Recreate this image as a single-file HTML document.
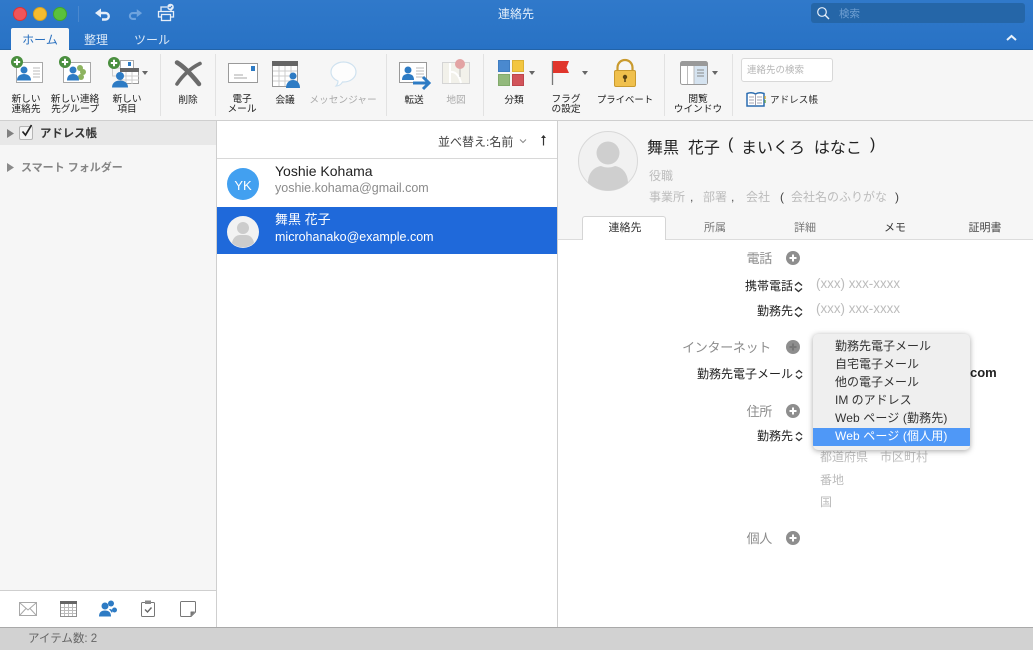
<!DOCTYPE html>
<html lang="ja"><head><meta charset="utf-8"><title>連絡先</title>
<style>
html,body{margin:0;padding:0}
body{width:1033px;height:650px;overflow:hidden;position:relative;background:#fff;font-family:"Liberation Sans","Noto Sans CJK JP",sans-serif;color:#222}
.a{position:absolute}
.t{position:absolute;white-space:nowrap;line-height:1}
.c{text-align:center;transform:translateX(-50%)}
.r{text-align:right;transform:translateX(-100%)}
.rb{font-size:9.7px;line-height:10px;color:#222;position:absolute;white-space:nowrap;text-align:center;transform:translateX(-50%)}
svg{position:absolute;overflow:visible}
.sep{position:absolute;top:54px;width:1px;height:62px;background:#e2e2e2}
.g{color:#bcbcbc}
.lab{color:#8c8c8c;font-size:13px;letter-spacing:-.3px}
.m{position:absolute;left:835px;font-size:12px;line-height:18px;color:#333;white-space:nowrap}
.sq{position:absolute;width:12px;height:12px;box-sizing:border-box}
</style></head><body>

<!-- title bar -->
<div class="a" style="left:0;top:0;width:1033px;height:49px;background:linear-gradient(#3079ca,#2872c5);border-bottom:1px solid #2263a8"></div>
<div class="a" style="left:13px;top:7px;width:12px;height:12px;border-radius:50%;background:#f0555a;border:.5px solid #d33"></div>
<div class="a" style="left:33px;top:7px;width:12px;height:12px;border-radius:50%;background:#f5bc30;border:.5px solid #d9a21f"></div>
<div class="a" style="left:53px;top:7px;width:12px;height:12px;border-radius:50%;background:#5ac13c;border:.5px solid #43a62a"></div>
<div class="a" style="left:78px;top:6px;width:1px;height:16px;background:#4a88cf"></div>
<svg style="left:94px;top:7px" width="18" height="14" viewBox="0 0 18 14"><path d="M5 6h6.500a3.200 3.200 0 0 1 0 6.500H8" fill="none" stroke="#e6eef8" stroke-width="2.400"/><path d="M1 6l6-4.500v9z" fill="#e6eef8"/></svg>
<svg style="left:127px;top:7px" width="16" height="14" viewBox="0 0 18 14"><path d="M13 6H6.500a3.200 3.200 0 0 0 0 6.500H10" fill="none" stroke="#6ea3de" stroke-width="2.400"/><path d="M17 6l-6-4.500v9z" fill="#6ea3de"/></svg>
<svg style="left:157px;top:4px" width="18" height="18" viewBox="0 0 18 18"><path d="M4 7V3h6M14 7V6M4 13H1.500V7.500H16.500V13H14" fill="none" stroke="#e6eef8" stroke-width="1.300"/><rect x="4.500" y="10.500" width="9" height="6" fill="none" stroke="#e6eef8" stroke-width="1.300"/><circle cx="13.500" cy="3" r="3.300" fill="#e6eef8"/><path d="M11.800 3l1.200 1.200 2-2.300" fill="none" stroke="#2b74c6" stroke-width="1"/></svg>
<div class="t c" style="left:516px;top:8px;font-size:12px;color:#e6f0fb">連絡先</div>
<div class="a" style="left:811px;top:3px;width:214px;height:20px;background:#2566a8;border-radius:3px"></div>
<svg style="left:816px;top:6px" width="14" height="14" viewBox="0 0 14 14"><circle cx="6" cy="6" r="4.300" fill="none" stroke="#e8f0fa" stroke-width="1.200"/><path d="M9 9l4 4" stroke="#e8f0fa" stroke-width="1.400"/></svg>
<div class="t" style="left:839px;top:9px;font-size:10.500px;color:#6f9fd2">検索</div>
<svg style="left:1006px;top:34px" width="11" height="7" viewBox="0 0 11 7"><path d="M1 6l4.500-4 4.500 4" fill="none" stroke="#eaf2fb" stroke-width="2"/></svg>
<!-- tabs -->
<div class="a" style="left:11px;top:28px;width:58px;height:22px;background:#f7f7f7;border-radius:2px 2px 0 0"></div>
<div class="t c" style="left:40px;top:34px;font-size:12px;color:#2a70bf">ホーム</div>
<div class="t c" style="left:96px;top:34px;font-size:12px;color:#dce9f7">整理</div>
<div class="t c" style="left:152px;top:34px;font-size:12px;color:#dce9f7">ツール</div>

<!-- ribbon -->
<div class="a" style="left:0;top:50px;width:1033px;height:70px;background:#f6f6f6;border-bottom:1px solid #cfcfcf"></div>
<div class="sep" style="left:160px"></div><div class="sep" style="left:215px"></div><div class="sep" style="left:386px"></div><div class="sep" style="left:483px"></div><div class="sep" style="left:664px"></div><div class="sep" style="left:732px"></div>

<!-- new contact -->
<svg style="left:11px;top:56px" width="33" height="28" viewBox="0 0 33 28"><rect x="5.500" y="6.500" width="26" height="20" fill="#fff" stroke="#a8a8a8"/><path d="M22 12h7M22 15h7M22 18h7M22 21h7" stroke="#bbb"/><circle cx="13" cy="14" r="3.500" fill="#2d7bc4"/><path d="M6 24.500c0-5 4-6.500 7-6.500s7 1.500 7 6.500z" fill="#2d7bc4"/><circle cx="6" cy="6" r="6" fill="#4a8f3f"/><path d="M6 2.800v6.400M2.800 6h6.400" stroke="#fff" stroke-width="2"/></svg>
<div class="rb" style="left:26px;top:95px">新しい<br>連絡先</div>
<svg style="left:59px;top:56px" width="33" height="28" viewBox="0 0 33 28"><rect x="4.500" y="6.500" width="27" height="20" fill="#fff" stroke="#a8a8a8"/><circle cx="21" cy="12" r="3" fill="#8db35f"/><circle cx="24" cy="16" r="3" fill="#8db35f"/><circle cx="22" cy="21" r="3" fill="#8db35f"/><circle cx="14" cy="14" r="3.500" fill="#2d7bc4"/><path d="M8 24.500c0-5 3-6.500 6-6.500s6 1.500 6 6.500z" fill="#2d7bc4"/><circle cx="6" cy="6" r="6" fill="#4a8f3f"/><path d="M6 2.800v6.400M2.800 6h6.400" stroke="#fff" stroke-width="2"/></svg>
<div class="rb" style="left:75px;top:95px">新しい連絡<br>先グループ</div>
<svg style="left:108px;top:57px" width="42" height="32" viewBox="0 0 42 32"><rect x="12.500" y="3.500" width="13" height="9" fill="#fff" stroke="#aaa"/><rect x="20" y="5" width="3" height="4" fill="#2d7bc4"/><rect x="4.500" y="11" width="8" height="8" fill="none" stroke="#ccc"/><rect x="12.500" y="11.500" width="18" height="15" fill="#fff" stroke="#999"/><rect x="12" y="11" width="19" height="4" fill="#666"/><path d="M12 19h19M12 23h19M18 15v12M24 15v12" stroke="#ccc"/><circle cx="12" cy="19" r="4" fill="#2d7bc4"/><path d="M4 30.500c0-5 4-7 8-7s8 2 8 7z" fill="#2d7bc4"/><circle cx="6" cy="6" r="6" fill="#4a8f3f"/><path d="M6 2.800v6.400M2.800 6h6.400" stroke="#fff" stroke-width="2"/></svg>
<svg style="left:142px;top:71px" width="7" height="4"><path d="M0 0h6l-3 4z" fill="#666"/></svg>
<div class="rb" style="left:127px;top:95px">新しい<br>項目</div>
<!-- delete -->
<svg style="left:174px;top:60px" width="28" height="26" viewBox="0 0 28 26"><path d="M3 2.500C9 6 17 14 25 24" fill="none" stroke="#6b6b6b" stroke-width="4.500" stroke-linecap="round"/><path d="M26 3.500C17 8 9 15 3 24" fill="none" stroke="#6b6b6b" stroke-width="3.600" stroke-linecap="round"/></svg>
<div class="rb" style="left:188px;top:96px">削除</div>
<!-- mail -->
<svg style="left:228px;top:63px" width="30" height="20" viewBox="0 0 30 20"><rect x=".5" y=".5" width="29" height="19" fill="#fff" stroke="#9a9a9a"/><rect x="23" y="3" width="4" height="5" fill="#2d7bc4"/><path d="M6 12h9M6 15h13" stroke="#aaa"/></svg>
<div class="rb" style="left:242px;top:95px">電子<br>メール</div>
<svg style="left:272px;top:61px" width="29" height="28" viewBox="0 0 29 28"><rect x=".5" y=".5" width="25" height="25" fill="#fff" stroke="#999"/><rect width="26" height="5" fill="#666"/><path d="M1 10h24M1 15h24M1 20h24M7 5v20M13 5v20M19 5v20" stroke="#ccc"/><circle cx="21" cy="15" r="3.500" fill="#2d7bc4"/><path d="M14 27c0-6 4-8 7-8s7 2 7 8z" fill="#2d7bc4"/></svg>
<div class="rb" style="left:285px;top:96px">会議</div>
<svg style="left:330px;top:61px" width="27" height="27" viewBox="0 0 27 27"><path d="M13.500 1C6.500 1 1 5.500 1 11c0 4 3 7.500 7 9 0 2-.5 3.500-2 5 3 0 5-1.500 6.500-4h1C20.500 21 26 16.500 26 11S20.500 1 13.500 1z" fill="#fdfdfd" stroke="#cfe2f0" stroke-width="1.200"/></svg>
<div class="rb" style="left:343px;top:96px;color:#aaa">メッセンジャー</div>
<!-- forward / map -->
<svg style="left:399px;top:62px" width="32" height="28" viewBox="0 0 32 28"><rect x=".5" y=".5" width="27" height="20" fill="#fff" stroke="#999"/><path d="M17 6h8M17 9h8M17 12h8M17 15h8" stroke="#bbb"/><circle cx="9" cy="8" r="3.500" fill="#2d7bc4"/><path d="M3 18c0-5 3-6 6-6s6 1 6 6z" fill="#2d7bc4"/><path d="M14 21h14" stroke="#2d7bc4" stroke-width="3"/><path d="M24 15l6 6-6 6" fill="none" stroke="#2d7bc4" stroke-width="3"/></svg>
<div class="rb" style="left:414px;top:96px">転送</div>
<svg style="left:442px;top:58px" width="29" height="27" viewBox="0 0 29 27"><rect x=".5" y="4.500" width="27" height="21" fill="#f2f1ea" stroke="#d5d5d5"/><path d="M8 5v20M8 14c5-1 9 3 11 11" fill="none" stroke="#fff" stroke-width="2"/><path d="M18 8v11" stroke="#bbb"/><circle cx="18" cy="6" r="5" fill="#e3a3a3"/></svg>
<div class="rb" style="left:456px;top:96px;color:#aaa">地図</div>
<!-- categorize -->
<div class="sq" style="left:498px;top:60px;background:#4a89cf;border:1px solid #3f7dc2"></div>
<div class="sq" style="left:512px;top:60px;background:#f3c640;border:1px solid #dcb134"></div>
<div class="sq" style="left:498px;top:74px;background:#93b97c;border:1px solid #82aa6c"></div>
<div class="sq" style="left:512px;top:74px;background:#d2545a;border:1px solid #bd464c"></div>
<svg style="left:529px;top:71px" width="7" height="4"><path d="M0 0h6l-3 4z" fill="#666"/></svg>
<div class="rb" style="left:514px;top:96px">分類</div>
<!-- flag -->
<svg style="left:551px;top:60px" width="20" height="26" viewBox="0 0 20 26"><path d="M1.500 1v24" stroke="#777" stroke-width="1.300"/><path d="M2 1h16l-2.500 6.500L18 13H2z" fill="#e0362c"/></svg>
<svg style="left:582px;top:71px" width="7" height="4"><path d="M0 0h6l-3 4z" fill="#666"/></svg>
<div class="rb" style="left:566px;top:95px">フラグ<br>の設定</div>
<!-- lock -->
<svg style="left:613px;top:59px" width="24" height="29" viewBox="0 0 24 29"><path d="M4.500 13V8.500a7.500 7.500 0 0 1 15 0V13" fill="none" stroke="#c99a2e" stroke-width="2.200"/><rect x="1.500" y="11.500" width="21" height="16" rx="1.500" fill="#f0c04c" stroke="#c99a2e"/><circle cx="12" cy="18" r="2.200" fill="#5a4414"/><path d="M12 18v5" stroke="#5a4414" stroke-width="1.500"/></svg>
<div class="rb" style="left:625px;top:95px;font-size:9.400px">プライベート</div>
<!-- reading window -->
<svg style="left:680px;top:61px" width="28" height="24" viewBox="0 0 28 24"><rect x=".5" y=".5" width="27" height="23" rx="2" fill="#fff" stroke="#999"/><rect x="1" y="1" width="26" height="4" fill="#999"/><rect x="14" y="5" width="13" height="18" fill="#d5e3f0"/><path d="M7.500 5v18M14 5v18" stroke="#bbb"/><path d="M17 9h7M17 12h7M17 15h7" stroke="#888"/></svg>
<svg style="left:712px;top:71px" width="7" height="4"><path d="M0 0h6l-3 4z" fill="#666"/></svg>
<div class="rb" style="left:698px;top:95px">閲覧<br>ウインドウ</div>
<!-- contact search -->
<div class="a" style="left:741px;top:58px;width:90px;height:22px;background:#fff;border:1px solid #d8d8d8;border-radius:3px"></div>
<div class="t" style="left:747px;top:66px;font-size:9.500px;color:#b5b5b5">連絡先の検索</div>
<svg style="left:746px;top:92px" width="20" height="15" viewBox="0 0 20 15"><path d="M1 1.500c3-1 6-1 8.500.5 2.500-1.500 5.500-1.500 8.500-.5V14H1z" fill="#fff" stroke="#2a6cb0" stroke-width="1.500"/><path d="M9.500 2v12M3 5h5M3 8h5M3 11h5M11 5h5M11 8h5M11 11h5" stroke="#889" stroke-width=".8"/><path d="M19 4v3" stroke="#d8b23a" stroke-width="1.400"/><path d="M19 8v3" stroke="#6ca54f" stroke-width="1.400"/></svg>
<div class="t" style="left:770px;top:96px;font-size:9.600px;color:#333">アドレス帳</div>

<!-- sidebar -->
<div class="a" style="left:0;top:121px;width:216px;height:469px;background:#f6f6f6"></div>
<div class="a" style="left:0;top:121px;width:216px;height:24px;background:#e8e8e8"></div>
<div class="a" style="left:216px;top:121px;width:1px;height:507px;background:#cfcfcf"></div>
<svg style="left:7px;top:129px" width="8" height="9"><path d="M0 0l7 4.500-7 4.500z" fill="#808080"/></svg>
<div class="a" style="left:19px;top:126px;width:12px;height:12px;background:#f4f4f4;border:1px solid #b5b5b5;border-radius:2px"></div>
<svg style="left:21px;top:124px" width="12" height="13" viewBox="0 0 12 13"><path d="M1.500 7.500l3 3.500L10.500 1" fill="none" stroke="#222" stroke-width="1.700"/></svg>
<div class="t" style="left:40px;top:129px;font-size:11.400px;font-weight:bold;color:#333">アドレス帳</div>
<svg style="left:7px;top:163px" width="8" height="9"><path d="M0 0l7 4.500-7 4.500z" fill="#8a8a8a"/></svg>
<div class="t" style="left:21px;top:163px;font-size:11px;font-weight:bold;color:#858585">スマート フォルダー</div>
<!-- bottom nav -->
<div class="a" style="left:0;top:590px;width:216px;height:1px;background:#cfcfcf"></div>
<svg style="left:19px;top:602px" width="18" height="14" viewBox="0 0 18 14"><rect x=".5" y=".5" width="17" height="13" fill="#fff" stroke="#a8a8a8"/><path d="M1 1l8 7 8-7M1 13l6-6.500M17 13l-6-6.500" fill="none" stroke="#a8a8a8"/></svg>
<svg style="left:60px;top:601px" width="17" height="16" viewBox="0 0 17 16"><rect x=".5" y=".5" width="16" height="15" fill="#fff" stroke="#8e8e8e"/><rect width="17" height="3" fill="#666"/><path d="M1 6.500h15M1 9.500h15M1 12.500h15M4.500 3v12M8.500 3v12M12.500 3v12" stroke="#bbb"/></svg>
<svg style="left:99px;top:600px" width="18" height="17" viewBox="0 0 18 17"><circle cx="12" cy="3.500" r="3" fill="#2d7bc4"/><circle cx="15.500" cy="10" r="2.500" fill="#2d7bc4"/><circle cx="6" cy="6" r="3.500" fill="#2d7bc4"/><path d="M0 16.500c0-4 2-6 6-6s6 2 6 6z" fill="#2d7bc4"/><path d="M10 9c3 0 4 1 3 4" fill="#2d7bc4"/></svg>
<svg style="left:141px;top:600px" width="14" height="17" viewBox="0 0 14 17"><rect x=".5" y="2.500" width="13" height="14" rx="1" fill="#fff" stroke="#777"/><rect x="4" y=".5" width="6" height="3.500" fill="#888"/><path d="M4 9.500l2.500 2.500 4-4.500" fill="none" stroke="#666" stroke-width="1.400"/></svg>
<svg style="left:180px;top:601px" width="16" height="16" viewBox="0 0 16 16"><path d="M1.500.5h13a1 1 0 0 1 1 1V11l-4.500 4.500H1.500a1 1 0 0 1-1-1v-13a1 1 0 0 1 1-1z" fill="#fff" stroke="#777"/><path d="M15 10.500h-4a.5.5 0 0 0-.5.500v4.500z" fill="#777"/></svg>

<!-- list -->
<div class="t" style="left:438px;top:136px;font-size:12px;color:#444">並べ替え:名前</div>
<svg style="left:519px;top:139px" width="8" height="5"><path d="M1 .5l3 3 3-3" fill="none" stroke="#888"/></svg>
<svg style="left:539px;top:134px" width="9" height="12"><path d="M4.500 1.500v10" stroke="#333" stroke-width="1.200"/><path d="M2 4l2.500-3L7 4z" fill="#333"/></svg>
<div class="a" style="left:217px;top:158px;width:340px;height:1px;background:#d8d8d8"></div>
<div class="a" style="left:227px;top:168px;width:32px;height:32px;border-radius:50%;background:#42a0f0"></div>
<div class="t c" style="left:243px;top:179px;font-size:13px;color:#fff">YK</div>
<div class="t" style="left:275px;top:164px;font-size:14px;color:#222">Yoshie Kohama</div>
<div class="t" style="left:275px;top:182px;font-size:12.500px;color:#8a8a8a">yoshie.kohama@gmail.com</div>
<div class="a" style="left:217px;top:207px;width:340px;height:47px;background:#1f69da"></div>
<svg style="left:227px;top:216px" width="32" height="32" viewBox="0 0 32 32"><circle cx="16" cy="16" r="16" fill="#f2f2f2"/><circle cx="16" cy="12" r="6" fill="#ccc"/><path d="M5 27c1-6 5-8 8-8h6c3 0 7 2 8 8a16 16 0 0 1-22 0z" fill="#ccc"/></svg>
<div class="t" style="left:275px;top:213px;font-size:13px;color:#fff">舞黒 花子</div>
<div class="t" style="left:275px;top:231px;font-size:12.500px;color:#fff">microhanako@example.com</div>
<div class="a" style="left:557px;top:121px;width:1px;height:507px;background:#cfcfcf"></div>

<!-- detail header -->
<div class="a" style="left:558px;top:121px;width:475px;height:118px;background:#f6f6f6"></div>
<div class="a" style="left:558px;top:239px;width:475px;height:1px;background:#dcdcdc"></div>
<svg style="left:578px;top:131px" width="60" height="60" viewBox="0 0 60 60"><circle cx="30" cy="30" r="29.500" fill="#f1f1f1" stroke="#d8d8d8"/><circle cx="30" cy="22" r="11.500" fill="#cfcfcf"/><path d="M10 52c0-10 6-16 13-17 4 2 10 2 14 0 7 1 13 7 13 17a30 30 0 0 1-40 0z" fill="#cfcfcf"/></svg>
<div class="t" style="left:647px;top:141px;font-size:16px;color:#222">舞黒&nbsp; 花子</div>
<div class="t" style="left:728px;top:137px;font-size:16px;color:#222">(</div>
<div class="t" style="left:741px;top:141px;font-size:16px;color:#222">まいくろ&nbsp; はなこ</div>
<div class="t" style="left:870px;top:137px;font-size:16px;color:#222">)</div>
<div class="t g" style="left:649px;top:170px;font-size:12px">役職</div>
<div class="t g" style="left:649px;top:191px;font-size:12px">事業所</div>
<div class="t" style="left:690px;top:191px;font-size:12px;color:#555">,</div>
<div class="t g" style="left:703px;top:191px;font-size:12px">部署</div>
<div class="t" style="left:731px;top:191px;font-size:12px;color:#555">,</div>
<div class="t g" style="left:746px;top:191px;font-size:12px">会社</div>
<div class="t" style="left:780px;top:191px;font-size:12px;color:#444">(</div>
<div class="t g" style="left:791px;top:191px;font-size:12px">会社名のふりがな</div>
<div class="t" style="left:895px;top:191px;font-size:12px;color:#444">)</div>
<!-- tabs -->
<div class="a" style="left:582px;top:216px;width:84px;height:24px;box-sizing:border-box;background:#fff;border:1px solid #d5d5d5;border-bottom:none;border-radius:3px 3px 0 0"></div>
<div class="t c" style="left:625px;top:223px;font-size:11px;color:#333">連絡先</div>
<div class="t c" style="left:715px;top:223px;font-size:11px;color:#777">所属</div>
<div class="t c" style="left:805px;top:223px;font-size:11px;color:#777">詳細</div>
<div class="t c" style="left:895px;top:223px;font-size:11px;color:#333">メモ</div>
<div class="t c" style="left:985px;top:223px;font-size:11px;color:#444">証明書</div>

<!-- fields -->
<div class="t r lab" style="left:772px;top:252px">電話</div>
<svg style="left:786px;top:251px" width="14" height="14" viewBox="0 0 14 14"><circle cx="7" cy="7" r="7" fill="#8e8e8e"/><path d="M7 3.500v7M3.500 7h7" stroke="#fff" stroke-width="2"/></svg>
<div class="t r" style="left:793px;top:280px;font-size:12px;color:#222">携帯電話</div>
<svg style="left:794px;top:281px" width="9" height="12" viewBox="0 0 9 12"><path d="M1 4.500l3.500-3 3.500 3M1 7.500l3.500 3 3.500-3" fill="none" stroke="#333" stroke-width="1.400"/></svg>
<div class="t g" style="left:816px;top:277px;font-size:13.400px">(xxx) xxx-xxxx</div>
<div class="t r" style="left:793px;top:305px;font-size:12px;color:#222">勤務先</div>
<svg style="left:794px;top:306px" width="9" height="12" viewBox="0 0 9 12"><path d="M1 4.500l3.500-3 3.500 3M1 7.500l3.500 3 3.500-3" fill="none" stroke="#333" stroke-width="1.400"/></svg>
<div class="t g" style="left:816px;top:302px;font-size:13.400px">(xxx) xxx-xxxx</div>

<div class="t r lab" style="left:771px;top:341px">インターネット</div>
<svg style="left:786px;top:340px" width="14" height="14" viewBox="0 0 14 14"><circle cx="7" cy="7" r="7" fill="#8e8e8e"/><path d="M7 3.500v7M3.500 7h7" stroke="#777" stroke-width="2"/></svg>
<div class="t r" style="left:793px;top:368px;font-size:12px;color:#222">勤務先電子メール</div>
<svg style="left:795px;top:369px" width="8" height="11" viewBox="0 0 9 12"><path d="M1 4.500l3.500-3 3.500 3M1 7.500l3.500 3 3.500-3" fill="none" stroke="#333" stroke-width="1.400"/></svg>
<div class="t" style="left:970px;top:366px;font-size:13px;font-weight:bold;color:#222">com</div>

<div class="t r lab" style="left:772px;top:405px">住所</div>
<svg style="left:786px;top:404px" width="14" height="14" viewBox="0 0 14 14"><circle cx="7" cy="7" r="7" fill="#8e8e8e"/><path d="M7 3.500v7M3.500 7h7" stroke="#fff" stroke-width="2"/></svg>
<div class="t r" style="left:793px;top:430px;font-size:12px;color:#222">勤務先</div>
<svg style="left:795px;top:431px" width="8" height="11" viewBox="0 0 9 12"><path d="M1 4.500l3.500-3 3.500 3M1 7.500l3.500 3 3.500-3" fill="none" stroke="#333" stroke-width="1.400"/></svg>
<div class="t g" style="left:820px;top:451px;font-size:12px">都道府県</div>
<div class="t g" style="left:880px;top:451px;font-size:12px">市区町村</div>
<div class="t g" style="left:820px;top:474px;font-size:12px">番地</div>
<div class="t g" style="left:820px;top:496px;font-size:12px">国</div>
<div class="t r lab" style="left:772px;top:532px">個人</div>
<svg style="left:786px;top:531px" width="14" height="14" viewBox="0 0 14 14"><circle cx="7" cy="7" r="7" fill="#8e8e8e"/><path d="M7 3.500v7M3.500 7h7" stroke="#fff" stroke-width="2"/></svg>

<!-- popup menu -->
<div class="a" style="left:813px;top:334px;width:157px;height:116px;background:#efefef;border-radius:5px;box-shadow:0 1px 6px rgba(0,0,0,.35);overflow:hidden">
<div class="a" style="left:0;top:94px;width:157px;height:18px;background:#4f98f7"></div>
</div>
<div class="m" style="top:337px">勤務先電子メール</div>
<div class="m" style="top:355px">自宅電子メール</div>
<div class="m" style="top:373px">他の電子メール</div>
<div class="m" style="top:391px">IM のアドレス</div>
<div class="m" style="top:409px;letter-spacing:.12px">Web ページ (勤務先)</div>
<div class="m" style="top:427px;letter-spacing:.12px;color:#fff">Web ページ (個人用)</div>

<!-- status bar -->
<div class="a" style="left:0;top:627px;width:1033px;height:23px;background:#d2d2d2;border-top:1px solid #a9a9a9;box-sizing:border-box"></div>
<div class="t" style="left:28px;top:634px;font-size:11.500px;color:#666">アイテム数: 2</div>
</body></html>
